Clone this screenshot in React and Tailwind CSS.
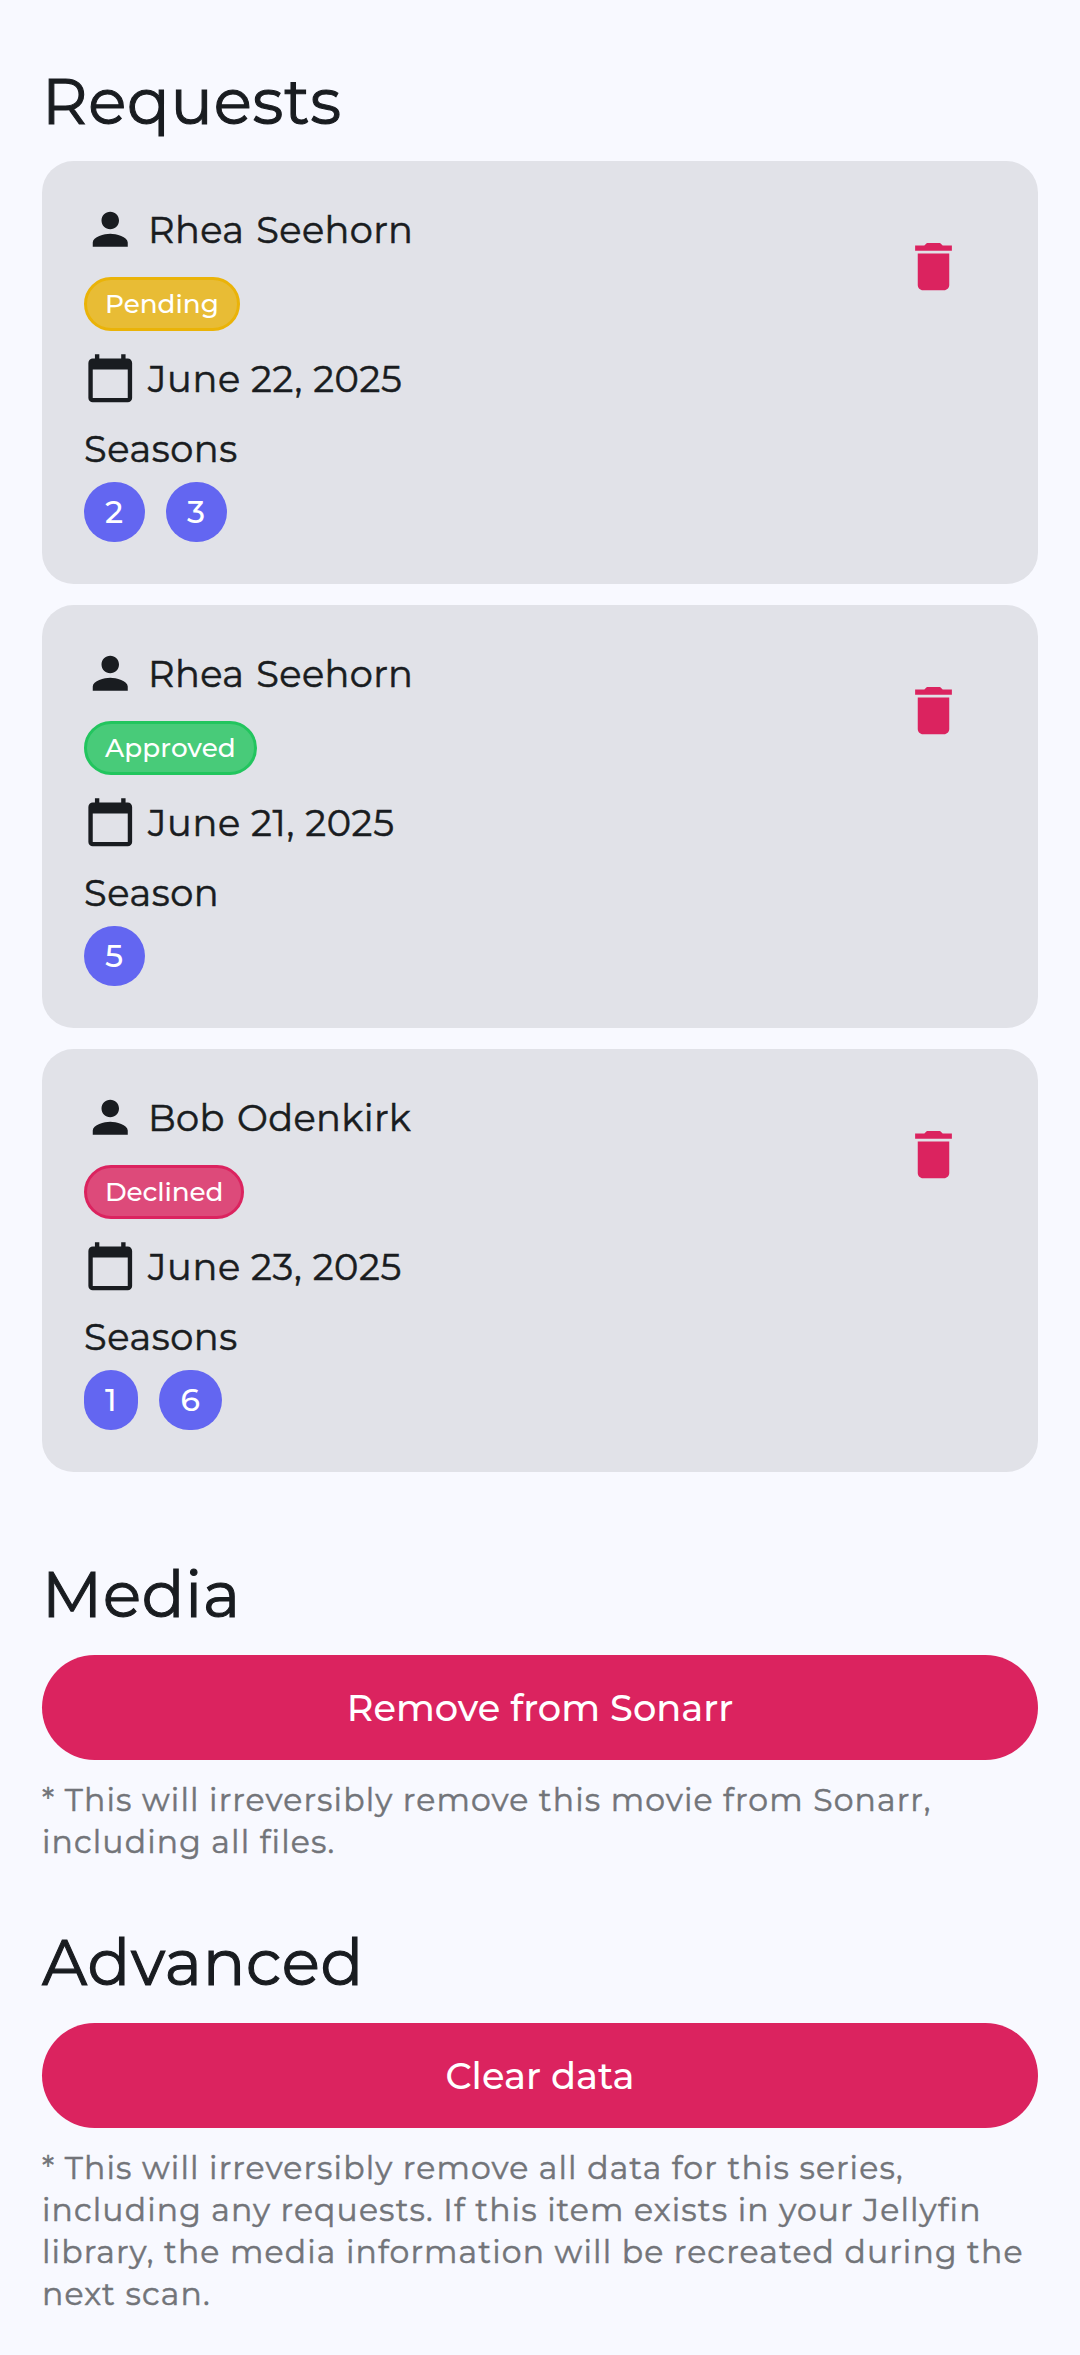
import React from "react";
import { MdPerson, MdCalendarToday, MdDelete } from "react-icons/md";

const STATUS_STYLES = {
  Pending: "border-[#eab308] bg-[#e8bc35] tracking-normal",
  Approved: "border-[#22c55e] bg-[#48cb79] tracking-[0.1px]",
  Declined: "border-[#db235f] bg-[#dd4a7a] tracking-[-0.1px]",
};

const REQUESTS = [
  { user: "Rhea Seehorn", status: "Pending", date: "June 22, 2025", seasons: [2, 3] },
  { user: "Rhea Seehorn", status: "Approved", date: "June 21, 2025", seasons: [5] },
  { user: "Bob Odenkirk", status: "Declined", date: "June 23, 2025", seasons: [1, 6] },
];

function SectionTitle({ children, className = "mb-[18px]" }) {
  return (
    <h2
      className={`h-[84px] text-[63px] leading-[84px] font-normal tracking-[0.75px] [-webkit-text-stroke:1.1px] ${className}`}
    >
      {children}
    </h2>
  );
}

function InfoRow({ icon: Icon, className = "", children }) {
  return (
    <div className="flex h-[52.5px] items-center gap-[11.5px]">
      <Icon className="size-[52.5px] shrink-0" />
      <span className={`pt-[2px] leading-[42px] ${className}`}>{children}</span>
    </div>
  );
}

function RequestCard({ user, status, date, seasons }) {
  return (
    <article className="flex h-[423px] items-start justify-between rounded-[31.5px] bg-[#e1e2e8] p-[42px] text-[36.75px] tracking-[0.58px] [-webkit-text-stroke:0.55px]">
      <div className="flex flex-col items-start">
        <InfoRow icon={MdPerson} className="tracking-[0.4px] [word-spacing:2px]">
          {user}
        </InfoRow>
        <span
          className={`mt-[21.5px] mb-[21px] flex h-[54px] items-center rounded-full border-[3px] px-[18px] text-[26.25px] leading-none font-medium text-white [-webkit-text-stroke:0] ${STATUS_STYLES[status]}`}
        >
          {status}
        </span>
        <InfoRow icon={MdCalendarToday} className="tracking-[0.65px]">
          {date}
        </InfoRow>
        <div className="mt-[23px] leading-[42px]">{seasons.length > 1 ? "Seasons" : "Season"}</div>
        <div className="mt-[12.5px] flex gap-[21px]">
          {seasons.map((n) => (
            <span
              key={n}
              className="flex h-[60px] items-center rounded-[30px] bg-[#6366f1] px-[21px] pt-[2px] text-[31.5px] leading-none font-medium tracking-[0.8px] text-white [-webkit-text-stroke:0]"
            >
              {n}
            </span>
          ))}
        </div>
      </div>
      <button aria-label="Delete request" className="p-[31.5px] text-[#db235f]">
        <MdDelete className="size-[63px]" />
      </button>
    </article>
  );
}

function DangerAction({ label, lines }) {
  return (
    <>
      <button className="flex h-[105px] w-full items-center justify-center rounded-[52.5px] bg-[#db235f] text-[36.75px] leading-[42px] font-medium tracking-[0.04px] text-white">
        {label}
      </button>
      <p className="mt-[19px] text-[31.5px] leading-[42px] tracking-[1.15px] text-[#727479] [-webkit-text-stroke:0.5px]">
        {lines.map((line) => (
          <span key={line} className="block whitespace-nowrap">
            {line}
          </span>
        ))}
      </p>
    </>
  );
}

export default function App() {
  return (
    <main className="h-[2355px] w-[1080px] overflow-hidden bg-[#f8f9ff] px-[42px] pt-[60px] font-['Montserrat','Inter',sans-serif] text-[#191c20]">
      <section>
        <SectionTitle className="mb-[17px]">Requests</SectionTitle>
        <div className="flex flex-col gap-[21px]">
          {REQUESTS.map((request) => (
            <RequestCard key={request.date} {...request} />
          ))}
        </div>
      </section>
      <section className="mt-[81px]">
        <SectionTitle>Media</SectionTitle>
        <DangerAction
          label="Remove from Sonarr"
          lines={["* This will irreversibly remove this movie from Sonarr,", "including all files."]}
        />
      </section>
      <section className="mt-[58px]">
        <SectionTitle>Advanced</SectionTitle>
        <DangerAction
          label="Clear data"
          lines={[
            "* This will irreversibly remove all data for this series,",
            "including any requests. If this item exists in your Jellyfin",
            "library, the media information will be recreated during the",
            "next scan.",
          ]}
        />
      </section>
    </main>
  );
}
